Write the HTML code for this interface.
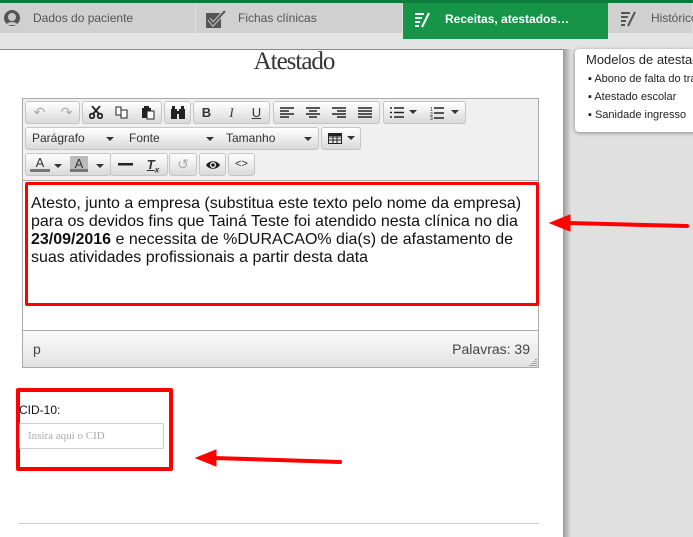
<!DOCTYPE html>
<html><head><meta charset="utf-8"><style>
*{margin:0;padding:0;box-sizing:border-box}
body{width:693px;height:537px;overflow:hidden;position:relative;background:#e0e0e0;font-family:"Liberation Sans",sans-serif}
.abs{position:absolute}
.tab{position:absolute;top:3px;height:30px;background:#d0d0d0;color:#555;font-size:12px;line-height:30px;border-right:1px solid #e0e0e0}
.btn{position:absolute;height:23px;border:1px solid #c5c5c5;border-radius:3px;background:linear-gradient(#fff,#d9d9d9);font-size:11px;color:#333}
.btn span{position:absolute;top:0;height:21px;line-height:21px;text-align:center;color:#333}
.btn svg{position:absolute}
.caret{display:inline-block;border-left:4px solid transparent;border-right:4px solid transparent;border-top:4px solid #333;vertical-align:middle}
</style></head><body>
<div class="abs" style="left:0;top:0;width:693px;height:3px;background:#0b7a3b"></div>
<div class="abs" style="left:0;top:3px;width:693px;height:30px;background:#d0d0d0"></div>
<div class="abs" style="left:0;top:33px;width:693px;height:16px;background:#e4e4e4"></div>
<div class="tab" style="left:0;width:196px"><svg class="abs" style="left:3px;top:7px" width="18" height="18" viewBox="0 0 18 18"><circle cx="9" cy="8" r="8" fill="#555"/><circle cx="9" cy="7" r="4" fill="#c8c8c8"/><path d="M3 15c2-4 10-4 12 0" fill="#c8c8c8"/></svg><span class="abs" style="left:33px">Dados do paciente</span></div>
<div class="tab" style="left:196px;width:207px"><svg class="abs" style="left:10px;top:7px" width="22" height="19" viewBox="0 0 22 19"><rect x="0" y="3" width="15" height="15" fill="#555"/><path d="M3 9l4 5L19 1" stroke="#c8c8c8" stroke-width="4" fill="none"/><path d="M3 9l4 5L19 1" stroke="#555" stroke-width="2" fill="none"/></svg><span class="abs" style="left:42px">Fichas clínicas</span></div>
<div class="abs" style="left:403px;top:3px;width:205px;height:36px;background:#169448;color:#fff;font-size:12px;font-weight:bold;line-height:32px"><svg class="abs" style="left:11px;top:8px" width="18" height="18" viewBox="0 0 18 18"><path d="M1 3h9M1 7h7M1 11h5M1 15h4M8 16l7-14" stroke="#fff" stroke-width="2" fill="none"/></svg><span class="abs" style="left:42px">Receitas, atestados…</span></div>
<div class="tab" style="left:608px;width:85px"><svg class="abs" style="left:12px;top:7px" width="18" height="18" viewBox="0 0 18 18"><path d="M1 3h9M1 7h7M1 11h5M1 15h4M8 16l7-14" stroke="#555" stroke-width="2" fill="none"/></svg><span class="abs" style="left:43px">Histórico</span></div>

<div class="abs" style="left:0;top:49px;width:565px;height:488px;background:#fff;border-top:1px solid #888"></div>
<div class="abs" style="left:563px;top:49px;width:8px;height:488px;background:linear-gradient(90deg,#999,#ddd)"></div>
<div class="abs" style="left:575px;top:49px;width:130px;height:83px;background:#fff;border-radius:4px;box-shadow:0 1px 4px #888;font-size:13px;color:#222">
<div class="abs" style="left:11px;top:3px;white-space:nowrap">Modelos de atestados</div>
<div class="abs" style="left:13px;top:21px;font-size:11px;line-height:18px;white-space:nowrap">▪ Abono de falta do trabalho<br>▪ Atestado escolar<br>▪ Sanidade ingresso</div></div>

<div class="abs" style="left:0;top:48px;width:565px;text-align:center;padding-left:23px;font-family:'Liberation Serif',serif;font-size:25px;color:#333;letter-spacing:-1px">Atestado</div>

<div class="abs" style="left:22px;top:98px;width:517px;height:270px;border:1px solid #aaa;background:#f0f0f0">
<div class="btn" style="left:2px;top:2px;width:55px"><span style="left:0;width:27px;color:#aaa;font-size:14px">↶</span><span style="left:27px;width:27px;color:#aaa;font-size:14px">↷</span></div>
<div class="btn" style="left:59px;top:2px;width:80px">
<svg style="left:6px;top:4px" width="14" height="13" viewBox="0 0 14 13"><circle cx="3" cy="10" r="2.3" fill="none" stroke="#222" stroke-width="1.8"/><circle cx="11" cy="10" r="2.3" fill="none" stroke="#222" stroke-width="1.8"/><path d="M4 8L11 0M10 8L3 0" stroke="#222" stroke-width="1.8"/></svg>
<svg style="left:32px;top:4px" width="14" height="13" viewBox="0 0 14 13"><path d="M1 1h5v8H1zM6 4h6v8H6z" fill="#fff" stroke="#222"/></svg>
<svg style="left:58px;top:3px" width="14" height="15" viewBox="0 0 14 15"><rect x="1" y="3" width="9" height="10" fill="#222"/><rect x="6" y="6" width="7" height="8" fill="#fff" stroke="#222"/><rect x="3" y="1" width="5" height="3" fill="#222"/></svg></div>
<div class="btn" style="left:141px;top:2px;width:27px"><svg style="left:6px;top:4px" width="14" height="13" viewBox="0 0 14 13"><rect x="0" y="3" width="6" height="10" fill="#222"/><rect x="8" y="3" width="6" height="10" fill="#222"/><rect x="1" y="0" width="3" height="4" fill="#222"/><rect x="10" y="0" width="3" height="4" fill="#222"/><rect x="5" y="5" width="4" height="3" fill="#222"/></svg></div>
<div class="btn" style="left:170px;top:2px;width:77px;font-size:13px"><span style="left:0;width:25px;font-weight:bold">B</span><span style="left:25px;width:25px;font-style:italic;font-family:'Liberation Serif'">I</span><span style="left:50px;width:25px;text-decoration:underline">U</span></div>
<div class="btn" style="left:250px;top:2px;width:107px">
<svg style="left:6px;top:5px" width="14" height="12"><path d="M0 1h14M0 4h9M0 7h14M0 10h9" stroke="#222" stroke-width="1.6"/></svg>
<svg style="left:32px;top:5px" width="14" height="12"><path d="M0 1h14M3 4h8M0 7h14M3 10h8" stroke="#222" stroke-width="1.6"/></svg>
<svg style="left:58px;top:5px" width="14" height="12"><path d="M0 1h14M5 4h9M0 7h14M5 10h9" stroke="#222" stroke-width="1.6"/></svg>
<svg style="left:84px;top:5px" width="14" height="12"><path d="M0 1h14M0 4h14M0 7h14M0 10h14" stroke="#222" stroke-width="1.6"/></svg></div>
<div class="btn" style="left:360px;top:2px;width:83px">
<svg style="left:6px;top:5px" width="14" height="12"><path d="M0 1h2M4 1h10M0 5.5h2M4 5.5h10M0 10h2M4 10h10" stroke="#222" stroke-width="1.4"/></svg><span style="left:25px"><i class="caret"></i></span>
<svg style="left:46px;top:4px" width="14" height="14"><path d="M4 2h10M4 7h10M4 12h10" stroke="#222" stroke-width="1.4"/><text x="0" y="5" font-size="5" fill="#222">1</text><text x="0" y="10" font-size="5" fill="#222">2</text><text x="0" y="14" font-size="5" fill="#222">3</text></svg><span style="left:67px"><i class="caret"></i></span></div>
<div class="btn" style="left:2px;top:28px;width:294px;font-size:12px"><span style="left:6px;text-align:left">Parágrafo</span><span style="left:80px"><i class="caret"></i></span><span style="left:103px">Fonte</span><span style="left:180px"><i class="caret"></i></span><span style="left:200px">Tamanho</span><span style="left:278px"><i class="caret"></i></span></div>
<div class="btn" style="left:298px;top:28px;width:40px"><svg style="left:6px;top:5px" width="14" height="11"><rect x="0.5" y="0.5" width="13" height="10" fill="none" stroke="#222"/><path d="M0 4h14M0 7h14M5 0v11M9 0v11" stroke="#222"/><rect x="0" y="0" width="14" height="3" fill="#222"/></svg><span style="left:25px"><i class="caret"></i></span></div>
<div class="btn" style="left:2px;top:54px;width:86px;font-size:13px"><span style="left:4px;width:20px;border-bottom:3px solid #777;height:18px;line-height:18px">A</span><span style="left:28px"><i class="caret"></i></span><span style="left:44px;width:18px;background:#bbb;height:16px;top:2px;line-height:16px;border-bottom:3px solid #777">A</span><span style="left:70px"><i class="caret"></i></span></div>
<div class="btn" style="left:87px;top:54px;width:58px;font-size:13px"><svg style="left:7px;top:9px" width="15" height="3"><rect width="15" height="2.5" fill="#222"/></svg><span style="left:28px;width:28px;font-style:italic;font-weight:bold;text-decoration:underline">T<sub style="font-size:8px">x</sub></span></div>
<div class="btn" style="left:146px;top:54px;width:28px"><span style="left:0;width:26px;color:#aaa;font-size:14px">↺</span></div>
<div class="btn" style="left:176px;top:54px;width:27px"><svg style="left:6px;top:6px" width="14" height="10" viewBox="0 0 14 10"><path d="M0 5C3 0 11 0 14 5C11 10 3 10 0 5z" fill="#222"/><circle cx="7" cy="5" r="3" fill="#fff"/><circle cx="7" cy="5" r="1.8" fill="#222"/></svg></div>
<div class="btn" style="left:205px;top:54px;width:27px"><span style="left:0;width:25px">&lt;&gt;</span></div>
<div class="abs" style="left:0;top:81px;width:515px;height:150px;background:#fff;border-top:1px solid #aaa"></div>
<div class="abs" style="left:2px;top:83px;width:514px;height:124px;border:3px solid #f00;border-radius:2px"></div>
<div class="abs" style="left:8px;top:96px;width:510px;font-size:16px;line-height:18px;color:#111">Atesto, junto a empresa (substitua este texto pelo nome da empresa) para os devidos fins que Tainá Teste foi atendido nesta clínica no dia <b>23/09/2016</b> e necessita de %DURACAO% dia(s) de afastamento de suas atividades profissionais a partir desta data</div>
<div class="abs" style="left:0;top:231px;width:515px;height:37px;border-top:1px solid #aaa;background:linear-gradient(#fafafa,#e2e2e2);font-size:14px;color:#444"><span class="abs" style="left:10px;top:10px">p</span><span class="abs" style="right:8px;top:10px">Palavras: 39</span><svg class="abs" style="right:1px;bottom:1px" width="8" height="8"><path d="M7 1v1M5 3v1M7 3v1M3 5v1M5 5v1M7 5v1M1 7v1M3 7v1M5 7v1M7 7v1" stroke="#666"/></svg></div>
</div>

<div class="abs" style="left:16px;top:388px;width:157px;height:83px;border:4px solid #f00;border-radius:2px"></div>
<div class="abs" style="left:19px;top:403px;font-size:12px;color:#111">CID-10:</div>
<div class="abs" style="left:19px;top:423px;width:145px;height:26px;border:1px solid #ccc;border-radius:2px;font-family:'Liberation Serif',serif;font-size:11px;color:#aaa;line-height:24px;padding-left:8px">Insira aqui o CID</div>
<div class="abs" style="left:18px;top:523px;width:521px;height:1px;background:#ccc"></div>

<svg class="abs" style="left:0;top:0" width="693" height="537"><g fill="#f00" stroke="#f00"><path d="M568 223L687 226" stroke-width="4" stroke-linecap="round"/><path d="M550 223l20-8v16z"/><path d="M214 458L340 462" stroke-width="4" stroke-linecap="round"/><path d="M196 458l20-8v16z"/></g></svg>
</body></html>
